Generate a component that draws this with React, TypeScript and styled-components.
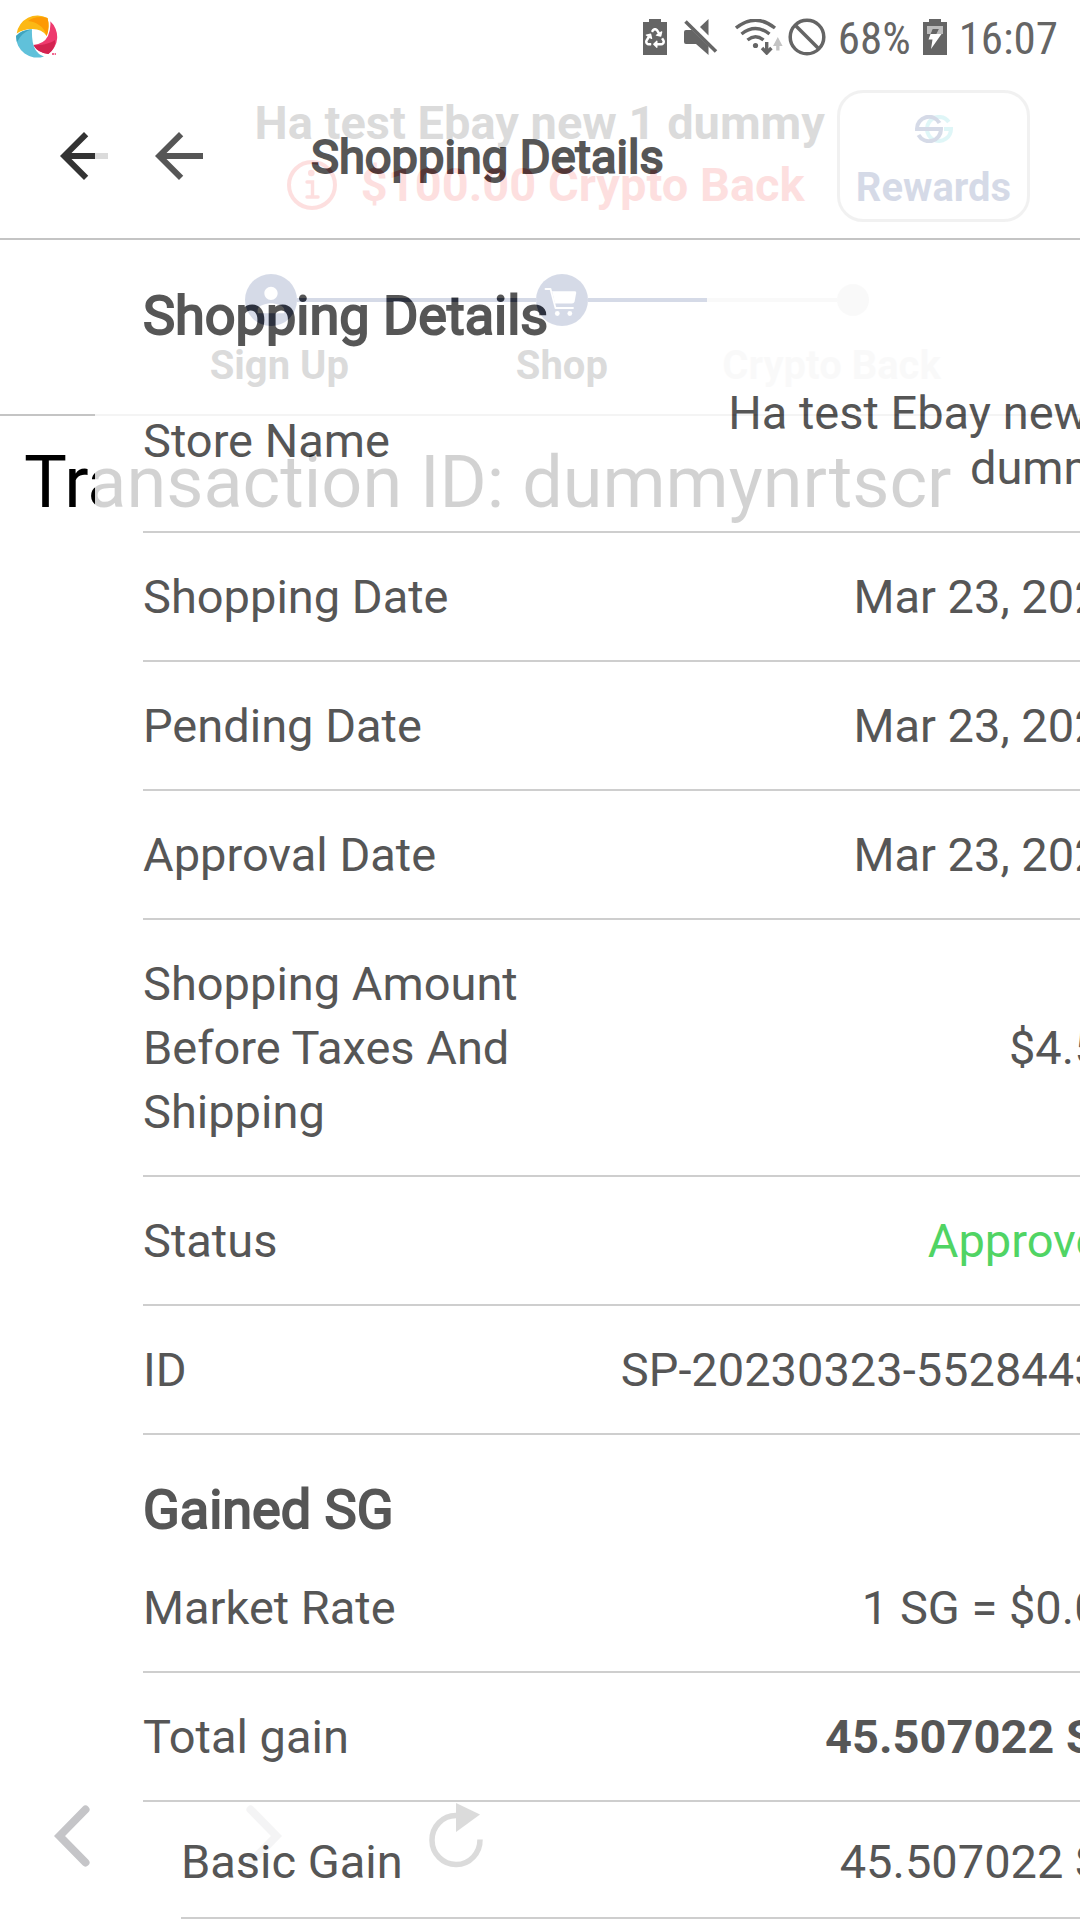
import React from 'react';
import styled, { createGlobalStyle } from 'styled-components';
import { FaRecycle } from 'react-icons/fa';
import { MdArrowBack, MdPerson } from 'react-icons/md';

const INK = '#333333';
const NAVY = '#15317c';
const RED = '#f44e4e';
const MUTED = '#e2e2e2';
const LINE = '#c4c4c4';
const STATUS = '#656565';

const GlobalStyle = createGlobalStyle`
  * { box-sizing: border-box; }
  body {
    margin: 0;
    background: #ffffff;
    color: ${INK};
    font-family: Roboto, "Liberation Sans", sans-serif;
    overflow: hidden;
  }
  h1, h2, p, dl, dd, ol { margin: 0; padding: 0; font-weight: 400; }
  svg { display: block; flex: none; }
`;

const Device = styled.div`
  display: flex;
  flex-direction: column;
  height: 100vh;
  overflow: hidden;
`;

const StatusBar = styled.header`
  display: flex;
  align-items: center;
  justify-content: space-between;
  flex: none;
  height: 72px;
  padding: 2px 22px 0 15px;
  color: ${STATUS};
`;

const StatusGroup = styled.div<{ $gap: number }>`
  display: flex;
  align-items: center;
  gap: ${(p) => p.$gap}px;
`;

const StatusText = styled.span`
  font-family: "Roboto Condensed", Roboto, sans-serif;
  font-size: 45px;
  line-height: 48px;
  padding-top: 4px;
`;

const Stage = styled.div`
  position: relative;
  flex: 1;
  min-height: 0;
  overflow: hidden;
`;

const StoreScreen = styled.main`
  display: flex;
  flex-direction: column;
  height: 100%;
`;

const DetailScreen = styled.section`
  position: absolute;
  inset: 0 auto auto 95px;
  width: 100%;
  min-height: 100%;
  background: #ffffff;
  opacity: 0.825;
`;

const AppBar = styled.div<{ $gap: number }>`
  display: flex;
  align-items: center;
  flex: none;
  gap: ${(p) => p.$gap}px;
  height: 168px;
  padding: 2px 50px 0 48px;
  border-bottom: 2px solid ${LINE};
`;

const IconButton = styled.button`
  display: flex;
  flex: none;
  padding: 0;
  border: 0;
  background: none;
  color: inherit;
`;

const StoreTitle = styled.div`
  display: flex;
  flex-direction: column;
  align-items: center;
  margin: 0 12px 4px auto;
  white-space: nowrap;
`;

const StoreName = styled.h1`
  font-size: 47px;
  font-weight: 700;
  line-height: 62px;
`;

const CryptoBack = styled.p`
  display: flex;
  align-items: center;
  gap: 24px;
  padding-left: 12px;
  color: ${RED};
  font-size: 47px;
  font-weight: 700;
  line-height: 62px;
`;

const RewardsButton = styled.button`
  display: flex;
  flex-direction: column;
  align-items: center;
  justify-content: space-between;
  flex: none;
  width: 193px;
  height: 132px;
  padding: 22px 0 7px;
  border: 3px solid #b5b5b5;
  border-radius: 26px;
  background: none;
  color: ${NAVY};
  font: 700 40px/48px Roboto, sans-serif;
`;

const Progress = styled.div`
  flex: none;
  height: 176px;
  padding-top: 34px;
  border-bottom: 2px solid ${LINE};
`;

const Track = styled.div`
  display: flex;
  align-items: center;
  height: 52px;
  padding: 0 211px 0 245px;
`;

const Segment = styled.span<{ $tone: string; $grow: number }>`
  flex: ${(p) => p.$grow} 1 0;
  height: 4px;
  background: ${(p) => p.$tone};
`;

const Dot = styled.span<{ $size: number; $tone: string }>`
  display: flex;
  align-items: center;
  justify-content: center;
  flex: none;
  width: ${(p) => p.$size}px;
  height: ${(p) => p.$size}px;
  border-radius: 50%;
  background: ${(p) => p.$tone};
  color: #ffffff;
`;

const Steps = styled.ol`
  display: grid;
  grid-template-columns: 1.1fr 1.1fr 1fr;
  padding: 16px 120px 0 138px;
  list-style: none;
`;

const Step = styled.li<{ $muted?: boolean }>`
  color: ${(p) => (p.$muted ? MUTED : INK)};
  font-size: 40px;
  font-weight: 700;
  line-height: 48px;
  text-align: center;
  white-space: nowrap;
`;

const Transaction = styled.p`
  flex: 1;
  padding: 25px 24px 0;
  color: #000000;
  font-size: 72px;
  line-height: 84px;
  white-space: nowrap;
`;

const BrowserBar = styled.nav`
  display: flex;
  align-items: center;
  flex: none;
  height: 168px;
  padding-left: 54px;
`;

const NavButton = styled(IconButton)<{ $space: number }>`
  color: #c5c5c8;
  margin-right: ${(p) => p.$space}px;
`;

const DetailTitle = styled.h1`
  padding-top: 2px;
  font-size: 47px;
  line-height: 64px;
  -webkit-text-stroke: 2px ${INK};
`;

const DetailBody = styled.div`
  padding: 1px 48px 0;
`;

const SectionTitle = styled.h2`
  padding: 43px 0 2px;
  font-size: 54px;
  line-height: 64px;
  -webkit-text-stroke: 2px ${INK};
`;

const Row = styled.div<{ $nested?: boolean }>`
  display: flex;
  align-items: center;
  justify-content: space-between;
  margin: ${(p) => (p.$nested ? '0 -8px 0 38px' : '0')};
  padding: ${(p) => (p.$nested ? '28px 0 23px' : '32px 0 31px')};
  border-bottom: 2px solid ${LINE};
  font-size: 47px;
`;

const Label = styled.dt`
  width: 400px;
  line-height: 64px;
`;

const Value = styled.dd<{ $strong?: boolean; $tone?: string }>`
  max-width: 520px;
  padding: 3px 0 5px;
  color: ${(p) => p.$tone || INK};
  font-weight: ${(p) => (p.$strong ? 700 : 400)};
  line-height: 55px;
  text-align: right;
`;

const BrandLogo = () => (
  <svg width="44" height="44" viewBox="0 0 44 44" aria-hidden="true">
    <path d="M1.7 18.6A21 21 0 0 1 32.5 3Q35 12 31.7 21Q27 14 17.5 14Q8 14 1.7 18.6Z" fill="#fcb814" />
    <path d="M13 6Q21 0 32.5 3Q35 12 31.7 21C29 11 21 7 13 6Z" fill="#fd9a05" />
    <path d="M35.3 6.3A21 21 0 0 1 33.3 39Q23 38 18.3 30Q29 29 33 21Q36 14 35.3 6.3Z" fill="#ee3a6e" />
    <path d="M18.3 30C27 31 36 28 40 25Q41 33 33.3 39Q23 38 18.3 30Z" fill="#d32350" />
    <path d="M17 14.3Q6 15 1 21A21 21 0 0 0 29 41.4Q16 38 17 14.3Z" fill="#60c1da" />
    <path d="M17 14.3Q6 15 1 21L2 27Q7 17 17 14.3Z" fill="#3fa5bf" />
    <path d="M37 39h4" stroke="#ee3a6e" strokeWidth="1.5" strokeDasharray="2 .6" />
  </svg>
);

const BatterySaver = () => (
  <svg width="24" height="36" viewBox="0 0 24 36" aria-hidden="true">
    <path d="M6 0h12v3h6v33H0V3h6z" fill="currentColor" />
    <FaRecycle x="2" y="9" size={20} color="#ffffff" />
  </svg>
);

const BatteryCharging = () => (
  <svg width="24" height="36" viewBox="0 0 24 36" aria-hidden="true">
    <path d="M6 0h12v3h6v33H0V3h6z" fill="currentColor" />
    <path d="M4 7h16v8H4z" fill="#bcbcbc" />
    <path d="M9.500 10H16L13.500 15H18.500L8 30L9.500 20.500H5.500Z" fill="#ffffff" />
    <path d="M9.500 10H16L13.500 15H7.500Z" fill="currentColor" />
  </svg>
);

const Muted = () => (
  <svg width="34" height="36" viewBox="0 0 34 36" aria-hidden="true" fill="currentColor">
    <path d="M24.500 0V16.500L16 8Z" />
    <path d="M0 13Q0 11 2 11H8L24.500 27V36L12 25H2Q0 25 0 23Z" />
    <path d="M1.500 2.500L32 32.500" stroke="currentColor" strokeWidth="3.500" />
  </svg>
);

const Wifi = () => (
  <svg width="48" height="36" viewBox="0 0 48 36" aria-hidden="true" fill="none" stroke="currentColor" strokeWidth="3.400">
    <path d="M1 9Q20.500 -6.500 40 9" />
    <path d="M6.500 15Q20.500 4 34.500 15" />
    <path d="M12.500 21Q20.500 14.500 28.500 21" />
    <circle cx="20.500" cy="26.500" r="2.600" fill="currentColor" stroke="none" />
    <path d="M31.700 23V33M27 29L31.700 34L36.400 29" />
    <path d="M38 27L42.800 18L47.600 27H44.500V31.500H41.200V27Z" fill="#c4c4c4" stroke="none" />
  </svg>
);

const Blocked = () => (
  <svg width="38" height="38" viewBox="0 0 38 38" aria-hidden="true" fill="none" stroke="currentColor" strokeWidth="3.500">
    <circle cx="19" cy="19" r="16.800" />
    <path d="M7 7L31 31" />
  </svg>
);

const InfoIcon = () => (
  <svg width="50" height="50" viewBox="0 0 50 50" aria-hidden="true" fill="none" stroke="currentColor">
    <circle cx="25" cy="25" r="23" strokeWidth="4" />
    <circle cx="24.300" cy="13" r="3.300" fill="currentColor" stroke="none" />
    <path d="M20 22H25.500V37M20 37H31" strokeWidth="3.400" strokeLinecap="round" />
  </svg>
);

const CoinLogo = () => (
  <svg width="38" height="28" viewBox="0 0 38 28" aria-hidden="true" fill="none" strokeWidth="4">
    <path d="M33.800 7A12 12 0 1 0 36 14H29" stroke="#4eccd7" />
    <path d="M24.500 8A12 12 0 0 0 2 14H26A12 12 0 0 1 3.500 20" stroke={NAVY} />
  </svg>
);

const CartIcon = () => (
  <svg width="52" height="52" viewBox="0 0 52 52" aria-hidden="true" fill="none" stroke="currentColor">
    <path d="M9.500 15H14.500L19.500 34H37" strokeWidth="1.800" strokeLinecap="round" strokeLinejoin="round" />
    <path d="M16 17.300H39Q40.500 17.300 40.200 19L38.600 27.500Q38.200 29.500 36 29.500H19Z" fill="currentColor" stroke="none" />
    <circle cx="21.300" cy="39.500" r="2.400" fill="currentColor" stroke="none" />
    <circle cx="33.800" cy="39.500" r="2.400" fill="currentColor" stroke="none" />
  </svg>
);

const Chevron = ({ flip }: { flip?: boolean }) => (
  <svg width="36" height="62" viewBox="0 0 36 62" aria-hidden="true" fill="none" stroke="currentColor" strokeWidth="8" strokeLinecap="round">
    <path d={flip ? 'M4.500 4.500L30.500 31L4.500 57.500' : 'M31.500 4.500L5.500 31L31.500 57.500'} />
  </svg>
);

const Reload = () => (
  <svg width="54" height="68" viewBox="0 0 54 68" aria-hidden="true">
    <path d="M27 13.500A24 24.500 0 1 0 51 37.500" fill="none" stroke={INK} strokeWidth="5.500" />
    <path d="M27 1L51 12.500L27 30Z" fill={INK} />
  </svg>
);

interface Detail {
  label: string;
  value: string;
  tone?: string;
  strong?: boolean;
  nested?: boolean;
}

const shopping: Detail[] = [
  { label: 'Store Name', value: 'Ha test Ebay new 1 dummy' },
  { label: 'Shopping Date', value: 'Mar 23, 2023' },
  { label: 'Pending Date', value: 'Mar 23, 2023' },
  { label: 'Approval Date', value: 'Mar 23, 2023' },
  { label: 'Shopping Amount Before Taxes And Shipping', value: '$4.55' },
  { label: 'Status', value: 'Approved', tone: '#2bcb43' },
  { label: 'ID', value: 'SP-20230323-55284433' },
];

const gained: Detail[] = [
  { label: 'Market Rate', value: '1 SG = $0.01' },
  { label: 'Total gain', value: '45.507022 SG', strong: true },
  { label: 'Basic Gain', value: '45.507022 SG', nested: true },
];

const DetailList = ({ items }: { items: Detail[] }) => (
  <dl>
    {items.map((item) => (
      <Row key={item.label} $nested={item.nested}>
        <Label>{item.label}</Label>
        <Value $tone={item.tone} $strong={item.strong}>{item.value}</Value>
      </Row>
    ))}
  </dl>
);

export default function App() {
  return (
    <Device>
      <GlobalStyle />
      <StatusBar>
        <BrandLogo />
        <StatusGroup $gap={12}>
          <StatusGroup $gap={17}>
            <BatterySaver />
            <Muted />
            <StatusGroup $gap={5}>
              <Wifi />
              <Blocked />
            </StatusGroup>
          </StatusGroup>
          <StatusText>68%</StatusText>
          <BatteryCharging />
          <StatusText>16:07</StatusText>
        </StatusGroup>
      </StatusBar>
      <Stage>
        <StoreScreen>
          <AppBar $gap={0}>
            <IconButton aria-label="Back"><MdArrowBack size={72} /></IconButton>
            <StoreTitle>
              <StoreName>Ha test Ebay new 1 dummy</StoreName>
              <CryptoBack><InfoIcon />$100.00 Crypto Back</CryptoBack>
            </StoreTitle>
            <RewardsButton><CoinLogo />Rewards</RewardsButton>
          </AppBar>
          <Progress>
            <Track>
              <Dot $size={52} $tone={NAVY}><MdPerson size={40} /></Dot>
              <Segment $tone={NAVY} $grow={239} />
              <Dot $size={52} $tone={NAVY}><CartIcon /></Dot>
              <Segment $tone={NAVY} $grow={119} />
              <Segment $tone={MUTED} $grow={130} />
              <Dot $size={32} $tone={MUTED} />
            </Track>
            <Steps>
              <Step>Sign Up</Step>
              <Step>Shop</Step>
              <Step $muted>Crypto Back</Step>
            </Steps>
          </Progress>
          <Transaction>Transaction ID: dummynrtscr</Transaction>
          <BrowserBar>
            <NavButton $space={156} aria-label="Previous page"><Chevron /></NavButton>
            <NavButton $space={147} aria-label="Next page"><Chevron flip /></NavButton>
            <NavButton $space={0} aria-label="Reload"><Reload /></NavButton>
          </BrowserBar>
        </StoreScreen>
        <DetailScreen>
          <AppBar $gap={96}>
            <IconButton aria-label="Back to store"><MdArrowBack size={72} /></IconButton>
            <DetailTitle>Shopping Details</DetailTitle>
          </AppBar>
          <DetailBody>
            <SectionTitle>Shopping Details</SectionTitle>
            <DetailList items={shopping} />
            <SectionTitle>Gained SG</SectionTitle>
            <DetailList items={gained} />
          </DetailBody>
        </DetailScreen>
      </Stage>
    </Device>
  );
}
